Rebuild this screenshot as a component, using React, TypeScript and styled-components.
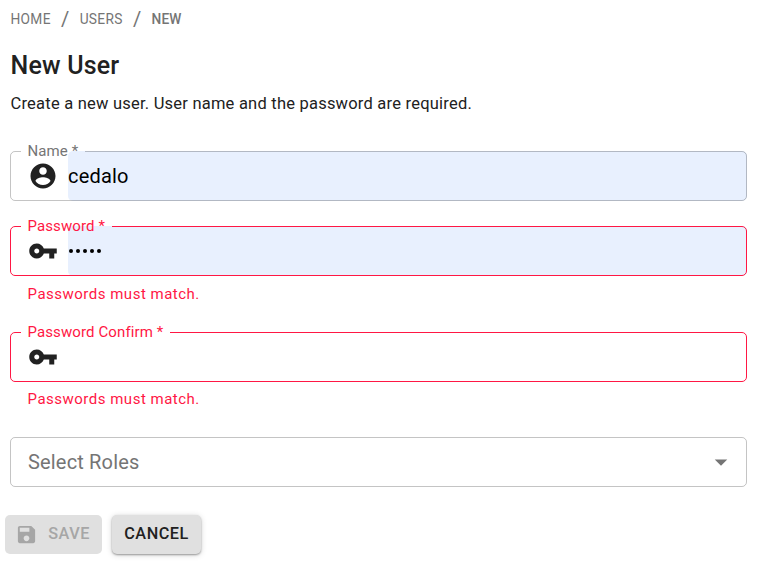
import React from "react";
import styled, { createGlobalStyle } from "styled-components";

const Global = createGlobalStyle`
  * { box-sizing: border-box; }
  body { margin: 0; background: #fff; color: #212121; font-family: Roboto, "Liberation Sans", sans-serif; }
`;

const Page = styled.main`
  display: flex;
  flex-direction: column;
  width: 766px;
  height: 576px;
  padding: 8px 19px 0 10px;
`;

const Breadcrumbs = styled.nav`
  display: flex;
  align-items: center;
  height: 22px;
  padding-left: 0.5px;
  color: #757575;
  font-size: 13.75px;
  line-height: 22px;
`;

const Crumb = styled.span<{ $current?: boolean }>`
  letter-spacing: ${(p) => (p.$current ? 0.1 : 0.3)}px;
  font-weight: ${(p) => (p.$current ? 500 : 400)};
`;

const Separator = styled.span`
  margin: 0 10.3px;
  font-size: 20px;
  line-height: 20px;
`;

const Title = styled.h1`
  margin: 18px 0 0;
  padding-left: 0.5px;
  font-size: 25px;
  font-weight: 500;
  line-height: 36px;
  letter-spacing: 0.19px;
`;

const Intro = styled.p`
  margin: 8px 0 35px;
  padding-left: 0.5px;
  font-size: 16.5px;
  line-height: 24px;
  letter-spacing: 0.22px;
`;

const Field = styled.div<{ $gap: number }>`
  margin-bottom: ${(p) => p.$gap}px;
`;

const Control = styled.div`
  position: relative;
  display: flex;
  align-items: center;
  height: 50px;
  padding-left: 18px;
  font-size: 20px;
  letter-spacing: 0.19px;
`;

const Adornment = styled.svg`
  flex: none;
  width: 30px;
  height: 30px;
  margin-right: 10px;
  fill: #212121;
`;

const Value = styled.div<{ $filled?: boolean }>`
  display: flex;
  align-items: center;
  flex: 1;
  height: 50px;
  border-radius: 5px;
  color: #000;
  background: ${(p) => (p.$filled ? "#e8f0fe" : "transparent")};
`;

const Outline = styled.fieldset<{ $error?: boolean }>`
  position: absolute;
  inset: -8px 0 0;
  margin: 0;
  padding: 0 10px;
  min-width: 0;
  border: 1px solid ${(p) => (p.$error ? "#ff1744" : "rgba(0, 0, 0, 0.23)")};
  border-radius: 5px;
  color: ${(p) => (p.$error ? "#ff1744" : "#757575")};
  pointer-events: none;
`;

const Label = styled.legend`
  height: 17px;
  padding: 0 6.7px 0 6.4px;
  font-size: 15px;
  line-height: 17px;
  letter-spacing: 0.12px;
  white-space: nowrap;
`;

const Helper = styled.p<{ $drop: number }>`
  margin: ${(p) => p.$drop}px 17.5px 0;
  height: 25px;
  color: #ff1744;
  font-size: 15px;
  line-height: 25px;
  letter-spacing: 0.5px;
`;

const Bullets = styled.span`
  display: flex;
  gap: 3px;
  padding-left: 1px;
`;

const Bullet = styled.i`
  width: 4px;
  height: 4px;
  border-radius: 50%;
  background: #000;
`;

const Select = styled.div`
  display: flex;
  align-items: center;
  justify-content: space-between;
  height: 50px;
  padding: 0 10px 0 17px;
  border: 1px solid rgba(0, 0, 0, 0.23);
  border-radius: 5px;
  color: #757575;
  font-size: 20px;
  letter-spacing: 0.17px;
`;

const Arrow = styled.svg`
  width: 30px;
  height: 30px;
  fill: #757575;
`;

const Actions = styled.div`
  display: flex;
  gap: 10px;
  margin: 28px 0 0 -5px;
`;

const Button = styled.button<{ $disabled?: boolean }>`
  display: flex;
  align-items: center;
  justify-content: center;
  width: ${(p) => (p.$disabled ? 97 : 89)}px;
  height: 39px;
  padding: 0 ${(p) => (p.$disabled ? 2 : 0)}px 0 0;
  border: 0;
  border-radius: 5px;
  background: #e0e0e0;
  color: ${(p) => (p.$disabled ? "#a6a6a6" : "#212121")};
  box-shadow: ${(p) =>
    p.$disabled
      ? "none"
      : "0 1px 2px rgba(0,0,0,.34), 0 1px 6px rgba(0,0,0,.16)"};
  font: 500 16.25px/28px Roboto, sans-serif;
  letter-spacing: 0.5px;
`;

const ButtonText = styled.span`
  padding-bottom: 2px;
`;

const SaveIcon = styled.svg`
  width: 23px;
  height: 23px;
  margin-right: 10px;
  fill: #a6a6a6;
`;

const ACCOUNT =
  "M12 2C6.48 2 2 6.48 2 12s4.48 10 10 10 10-4.48 10-10S17.52 2 12 2zm0 3c1.66 0 3 1.34 3 3s-1.34 3-3 3-3-1.34-3-3 1.34-3 3-3zm0 14.2c-2.5 0-4.71-1.28-6-3.22.03-1.99 4-3.08 6-3.08 1.99 0 5.97 1.09 6 3.08-1.29 1.94-3.5 3.22-6 3.22z";
const KEY =
  "M12.65 10C11.83 7.67 9.61 6 7 6c-3.31 0-6 2.69-6 6s2.69 6 6 6c2.61 0 4.83-1.67 5.65-4H17v4h4v-4h2v-4H12.65zM7 14c-1.1 0-2-.9-2-2s.9-2 2-2 2 .9 2 2-.9 2-2 2z";
const SAVE =
  "M17 3H5c-1.11 0-2 .9-2 2v14c0 1.1.89 2 2 2h14c1.1 0 2-.9 2-2V7l-4-4zm-5 16c-1.66 0-3-1.34-3-3s1.34-3 3-3 3 1.34 3 3-1.34 3-3 3zm3-10H5V5h10v4z";

interface TextFieldProps {
  label: string;
  icon: string;
  gap: number;
  filled?: boolean;
  helper?: string;
  helperDrop?: number;
  children?: React.ReactNode;
}

function TextField({ label, icon, gap, filled, helper, helperDrop = 5, children }: TextFieldProps) {
  return (
    <Field $gap={gap}>
      <Control>
        <Adornment viewBox="0 0 24 24">
          <path d={icon} />
        </Adornment>
        <Value $filled={filled}>{children}</Value>
        <Outline $error={!!helper}>
          <Label>{label} *</Label>
        </Outline>
      </Control>
      {helper && <Helper $drop={helperDrop}>{helper}</Helper>}
    </Field>
  );
}

export default function App() {
  return (
    <>
      <Global />
      <Page>
        <Breadcrumbs>
          <Crumb>HOME</Crumb>
          <Separator>/</Separator>
          <Crumb>USERS</Crumb>
          <Separator>/</Separator>
          <Crumb $current>NEW</Crumb>
        </Breadcrumbs>
        <Title>New User</Title>
        <Intro>Create a new user. User name and the password are required.</Intro>
        <TextField label="Name" icon={ACCOUNT} gap={25} filled>
          cedalo
        </TextField>
        <TextField
          label="Password"
          icon={KEY}
          gap={25}
          filled
          helper="Passwords must match."
          helperDrop={6}
        >
          <Bullets>
            {[0, 1, 2, 3, 4].map((i) => (
              <Bullet key={i} />
            ))}
          </Bullets>
        </TextField>
        <TextField label="Password Confirm" icon={KEY} gap={25} helper="Passwords must match." />
        <Select>
          Select Roles
          <Arrow viewBox="0 0 24 24">
            <path d="M7 10l5 5 5-5z" />
          </Arrow>
        </Select>
        <Actions>
          <Button $disabled>
            <SaveIcon viewBox="0 0 24 24">
              <path d={SAVE} />
            </SaveIcon>
            <ButtonText>SAVE</ButtonText>
          </Button>
          <Button>
            <ButtonText>CANCEL</ButtonText>
          </Button>
        </Actions>
      </Page>
    </>
  );
}
